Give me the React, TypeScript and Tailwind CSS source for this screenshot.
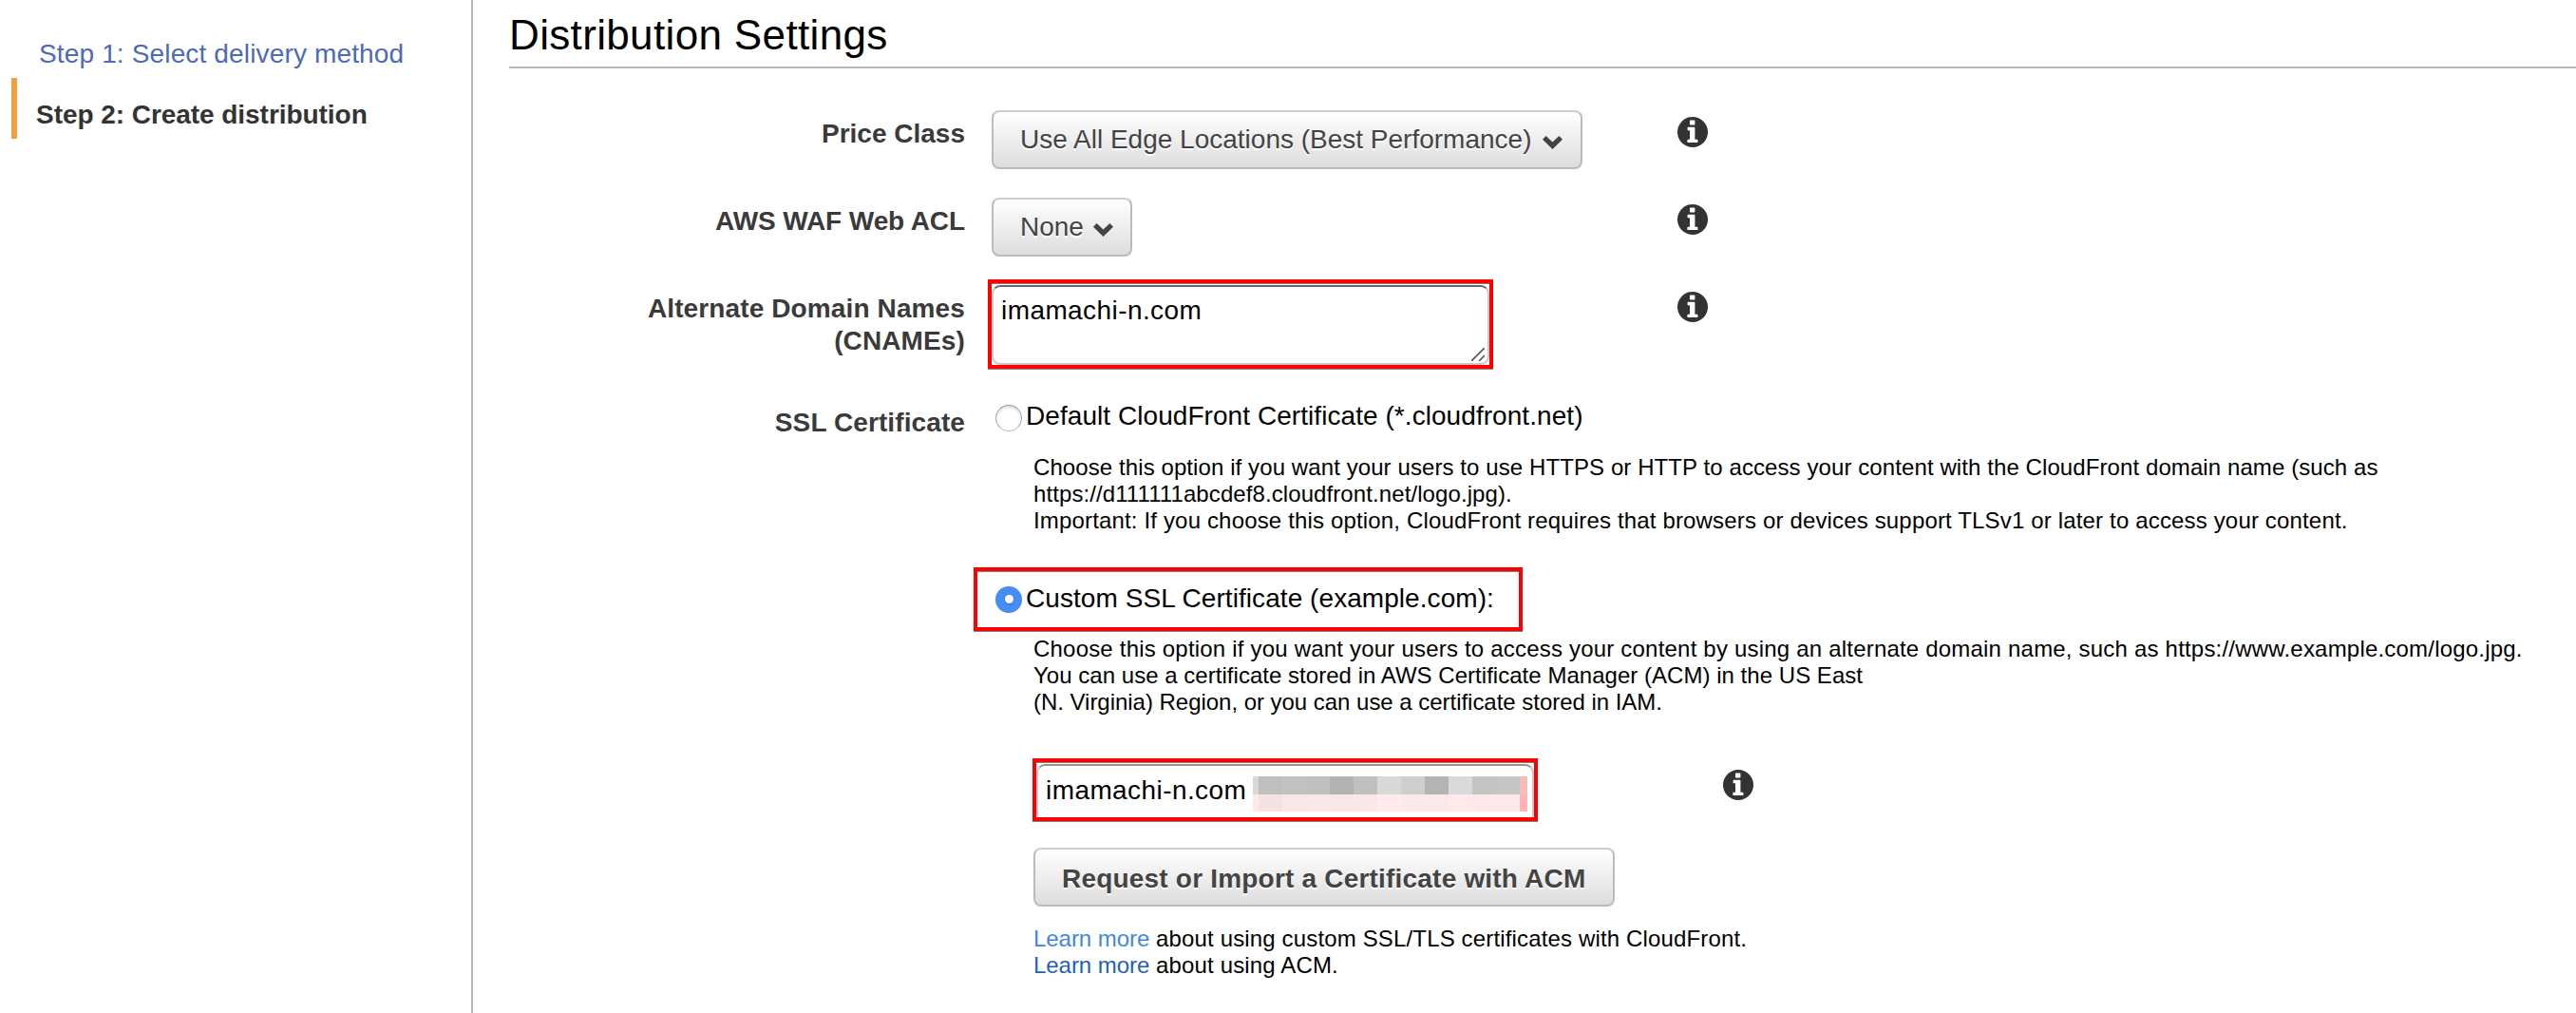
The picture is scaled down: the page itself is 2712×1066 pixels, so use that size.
import type { ReactNode } from "react";

function InfoIcon({ className = "" }: { className?: string }) {
  return (
    <svg viewBox="0 0 32 32" className={`size-8 shrink-0 ${className}`} aria-label="Info">
      <circle cx="16" cy="16" r="16" fill="#333333" />
      <path
        fill="#ffffff"
        d="M13.6 3.6h4.2q.6 0 .6.6v3.6q0 .6-.6.6h-4.2q-.6 0-.6-.6V4.2q0-.6.6-.6zM11.2 10.700h6.600q.6 0 .6.6V23.700h2.400q.6 0 .6.6v2.200q0 .6-.6.6h-9.800q-.6 0-.6-.6v-2.200q0-.6.6-.6H13V14.300h-1.800q-.6 0-.6-.6v-2.400q0-.6.6-.6z"
      />
    </svg>
  );
}

function Chevron() {
  return (
    <svg viewBox="0 0 21 14" className="mt-[6px] h-[14px] w-[21px] shrink-0">
      <path d="M0 3.8 3.6 0l6.900 6.500L17.400 0 21 3.800 10.500 14z" fill="#444444" />
    </svg>
  );
}

const buttonStyle =
  "flex h-[62px] items-center rounded-lg border-2 border-[#bbbbbb] border-t-[#cccccc] bg-linear-to-b from-white to-[#dddddd] text-[28px] leading-[34px] text-[#444444] [text-shadow:0_2px_1px_#ffffff]";

function Highlight({ className, children }: { className: string; children: ReactNode }) {
  return (
    <div
      className={`border-4 border-[#ff0000] shadow-[0_1px_0_#808080,inset_0_1px_0_#808080] ${className}`}
    >
      {children}
    </div>
  );
}

function Label({ className, children }: { className: string; children: ReactNode }) {
  return (
    <div
      className={`mr-[28px] w-[480px] shrink-0 text-right text-[28px] leading-[34px] font-bold text-[#3a3a3a] ${className}`}
    >
      {children}
    </div>
  );
}

const censorTop = [
  "w-[6px] bg-[#d9d9d9]",
  "w-[25px] bg-[#bfbfbf]",
  "w-[25px] bg-[#c2c2c2]",
  "w-[25px] bg-[#c0c0c0]",
  "w-[25px] bg-[#b3b3b3]",
  "w-[25px] bg-[#c0c0c0]",
  "w-[25px] bg-[#d9d9d9]",
  "w-[25px] bg-[#cecece]",
  "w-[25px] bg-[#b4b4b4]",
  "w-[25px] bg-[#dadada]",
  "w-[25px] bg-[#c4c4c4]",
  "w-[25px] bg-[#c6c6c6]",
  "w-[8px] bg-[#f5bcbc]",
];
const censorBottom = [
  "w-[6px] bg-[#ffeaea]",
  "w-[25px] bg-[#f5e3e3]",
  "w-[25px] bg-[#f9e6e6]",
  "w-[25px] bg-[#fae7e7]",
  "w-[25px] bg-[#f9e6e6]",
  "w-[25px] bg-[#fae8e8]",
  "w-[25px] bg-[#ffebeb]",
  "w-[25px] bg-[#fce9e9]",
  "w-[25px] bg-[#fbe8e8]",
  "w-[25px] bg-[#ffeaea]",
  "w-[25px] bg-[#fce8e8]",
  "w-[25px] bg-[#fbe8e8]",
  "w-[8px] bg-[#ffb5b5]",
];

export default function App() {
  return (
    <div className="flex h-[1066px] w-[2712px] overflow-hidden bg-white font-['Liberation_Sans',Arial,sans-serif] text-black">
      <aside className="w-[498px] shrink-0 border-r-2 border-[#b7b7b7] text-[28px] leading-[34px]">
        <div className="mt-[40px] pl-[41px] tracking-[0.15px] text-[#4d69b8]">
          Step 1: Select delivery method
        </div>
        <div className="mt-[8px] ml-3 flex h-16 items-center border-l-6 border-[#f5a03c] pl-5 font-bold text-[#333333]">
          <span className="mt-[13px] tracking-[-0.05px]">Step 2: Create distribution</span>
        </div>
      </aside>

      <main className="w-[2214px] shrink-0 pl-[38px]">
        <h1 className="h-[72px] border-b-2 border-[#b7b7b7] pt-[12px] text-[44px] leading-[50px] tracking-[0.35px]">
          Distribution Settings
        </h1>

        <div className="mt-[44px] flex h-[92px] items-start">
          <Label className="mt-[8px]">Price Class</Label>
          <div className="w-[722px]">
            <button className={`${buttonStyle} w-[622px] justify-between pr-[19px] pl-[28px]`}>
              Use All Edge Locations (Best Performance)
              <Chevron />
            </button>
          </div>
          <InfoIcon className="mt-[7px]" />
        </div>

        <div className="flex h-[86px] items-start">
          <Label className="mt-[8px] tracking-[-0.1px]">AWS WAF Web ACL</Label>
          <div className="w-[722px]">
            <button className={`${buttonStyle} w-[148px] justify-between pr-[18px] pl-[28px]`}>
              None
              <Chevron />
            </button>
          </div>
          <InfoIcon className="mt-[7px]" />
        </div>

        <div className="flex items-start">
          <Label className="mt-[14px] tracking-[0.12px]">
            Alternate Domain Names
            <br />
            (CNAMEs)
          </Label>
          <Highlight className="mr-[194px] -ml-1 h-[94px] w-[532px] pt-[2px]">
            <div className="relative h-[84px] rounded-[9px] border-2 border-[#c8c8c8] border-t-[#666666] pt-[8px] pl-[8px] text-[28px] leading-[34px] tracking-[0.42px]">
              imamachi-n.com
              <svg viewBox="0 0 14 14" className="absolute right-[3px] bottom-[2px] size-[14px]">
                <path d="M0 14 14 0M8 14l6-6" stroke="#555555" strokeWidth="1.6" fill="none" />
              </svg>
            </div>
          </Highlight>
          <InfoIcon className="mt-[13px]" />
        </div>

        <div className="mt-[38px] flex items-start">
          <Label className="mt-[2px] tracking-[0.1px]">SSL Certificate</Label>
          <div className="text-[24px] leading-[28px]">
            <label className="ml-1 flex h-7 items-center text-[28px] tracking-[0.06px]">
              <span className="mr-1 size-7 rounded-full border border-[#a8a8a8] border-t-[#999999] border-b-[#c0c0c0] bg-white shadow-[inset_0_2px_3px_#dddddd]" />
              <span className="-mt-[4px]">Default CloudFront Certificate (*.cloudfront.net)</span>
            </label>

            <p className="mt-[24px] ml-[44px] tracking-[0.09px] whitespace-nowrap">
              Choose this option if you want your users to use HTTPS or HTTP to access your content
              with the CloudFront domain name (such as
              <br />
              https://d111111abcdef8.cloudfront.net/logo.jpg).
              <br />
              <span className="tracking-[0.16px]">
                Important: If you choose this option, CloudFront requires that browsers or devices
                support TLSv1 or later to access your content.
              </span>
            </p>

            <Highlight className="mt-[35px] -ml-[19px] flex h-[67px] w-[578px] items-center pl-[19px]">
              <span className="mr-1 flex size-7 items-center justify-center rounded-full bg-[#478bf7]">
                <span className="size-[9px] rounded-full bg-white shadow-[0_1px_1px_#2f6ad0]" />
              </span>
              <span className="-mt-[1px] text-[28px] tracking-[0.06px]">
                Custom SSL Certificate (example.com):
              </span>
            </Highlight>

            <p className="mt-[5px] ml-[44px] tracking-[0.03px] whitespace-nowrap">
              <span className="tracking-[0.2px]">
                Choose this option if you want your users to access your content by using an
                alternate domain name, such as https://www.example.com/logo.jpg.
              </span>
              <br />
              You can use a certificate stored in AWS Certificate Manager (ACM) in the US East
              <br />
              <span className="tracking-[-0.03px]">
                (N. Virginia) Region, or you can use a certificate stored in IAM.
              </span>
            </p>

            <div className="mt-[45px] ml-[43px] flex items-start">
              <Highlight className="mr-[195px] h-[66px] w-[532px] overflow-hidden pt-[2px]">
                <div className="flex h-[62px] rounded-[9px] border-2 border-[#c8c8c8] border-t-[#8f9494] pl-[8px]">
                  <span className="w-[218px] shrink-0 pt-[9px] text-[28px] leading-[34px] tracking-[0.42px]">
                    imamachi-n.com
                  </span>
                  <div className="mt-[11px] shrink-0">
                    <div className="flex h-[19px]">
                      {censorTop.map((cell, i) => (
                        <span key={i} className={cell} />
                      ))}
                    </div>
                    <div className="flex h-[18px]">
                      {censorBottom.map((cell, i) => (
                        <span key={i} className={cell} />
                      ))}
                    </div>
                  </div>
                </div>
              </Highlight>
              <InfoIcon className="mt-[12px]" />
            </div>

            <button
              className={`${buttonStyle} mt-[28px] ml-[44px] w-[612px] pt-[3px] pl-[28px] font-bold tracking-[0.2px]`}
            >
              Request or Import a Certificate with ACM
            </button>

            <p className="mt-[20px] ml-[44px] tracking-[0.15px] whitespace-nowrap">
              <a className="tracking-[-0.05px] text-[#3f88dc]">Learn more</a> about using custom
              SSL/TLS certificates with CloudFront.
              <br />
              <a className="tracking-[-0.05px] text-[#1f62b5]">Learn more</a> about using ACM.
            </p>
          </div>
        </div>
      </main>
    </div>
  );
}
